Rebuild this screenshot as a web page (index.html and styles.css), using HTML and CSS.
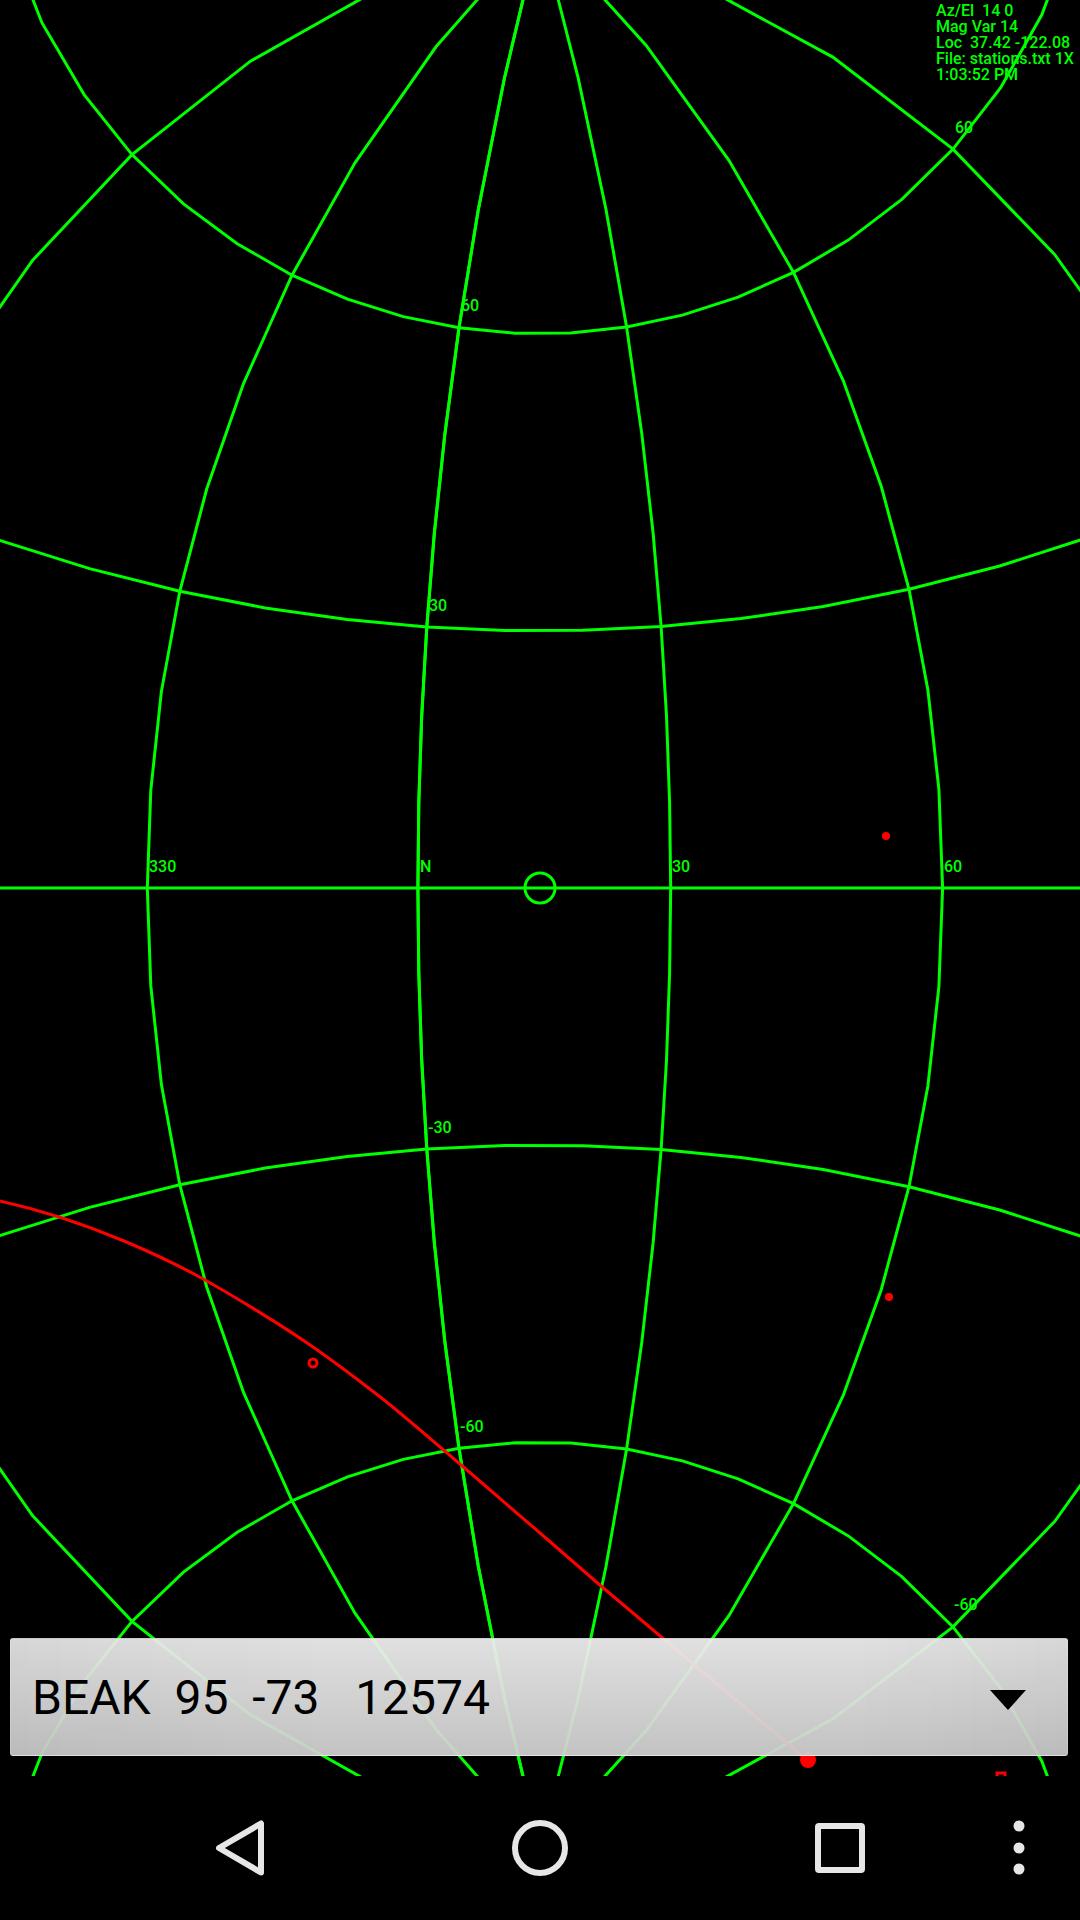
FILE: index.html
```html
<!DOCTYPE html>
<html lang="en">
<head>
<meta charset="utf-8">
<meta name="viewport" content="width=device-width, initial-scale=1">
<title>Satellite tracker</title>
<link rel="stylesheet" href="styles.css">
</head>
<body>
<div class="app">
  <main class="sky">
    <svg class="chart" viewBox="0 0 1080 1776" preserveAspectRatio="xMidYMid slice" role="img" aria-label="Sky chart">
      <g id="grid" class="grid"></g>
      <circle class="grid" cx="540" cy="888" r="15"/>
      <g class="labels">
        <text x="149" y="872">330</text>
        <text x="420" y="872">N</text>
        <text x="672" y="872">30</text>
        <text x="944" y="872">60</text>
        <text x="461" y="311">60</text>
        <text x="429" y="611">30</text>
        <text x="428" y="1133">-30</text>
        <text x="460" y="1432">-60</text>
        <text x="955" y="133">60</text>
        <text x="954" y="1610">-60</text>
      </g>
      <path class="track" d="M0 1201C40 1210 86 1225 124 1241S180 1266 205 1280S280 1324 313 1347S362 1383 384 1400S490 1490 540 1533L601 1586L808 1761"/>
      <g class="targets">
        <circle cx="886" cy="836" r="4"/>
        <circle cx="889" cy="1297" r="4"/>
        <circle cx="808" cy="1760" r="8"/>
      </g>
      <g class="track">
        <circle cx="313" cy="1363" r="4"/>
        <rect x="997" y="1773" width="8" height="8"/>
      </g>
    </svg>
    <div class="status">
      <div>Az/El&nbsp; 14 0</div>
      <div>Mag Var 14</div>
      <div>Loc&nbsp; 37.42 -122.08</div>
      <div>File: stations.txt 1X</div>
      <div>1:03:52 PM</div>
    </div>
    <div class="picker">
      <select class="picker-select" aria-label="Satellite">
        <option>BEAK&nbsp; 95&nbsp; -73&nbsp;&nbsp; 12574</option>
      </select>
      <svg class="picker-arrow" viewBox="0 0 36 20" aria-hidden="true"><path d="M0 0H36L18 20Z"/></svg>
    </div>
  </main>
  <nav class="navbar" aria-label="System">
    <button class="nav-back" aria-label="Back"><svg viewBox="0 0 60 60"><path d="M51 5.500V54.500L9 30Z"/></svg></button>
    <button class="nav-home" aria-label="Home"><svg viewBox="0 0 60 60"><circle cx="30" cy="30" r="25"/></svg></button>
    <button class="nav-recent" aria-label="Recent apps"><svg viewBox="0 0 60 60"><rect x="8" y="8" width="44" height="44" rx="1"/></svg></button>
    <button class="nav-more" aria-label="More options"><svg viewBox="0 0 14 60"><circle cx="7" cy="8" r="5.500"/><circle cx="7" cy="30" r="5.500"/><circle cx="7" cy="51" r="5.500"/></svg></button>
  </nav>
</div>
<script src="grid.js"></script>
</body>
</html>
```
FILE: grid.js
```js
// Stereographic azimuth/elevation grid, drawn in 10 degree steps.
var VIEW_AZ = 14.5, SCALE = 960, CX = 540, CY = 888, RAD = Math.PI / 180;

function project(az, el) {
  var a = (az - VIEW_AZ) * RAD, e = el * RAD;
  var k = SCALE / (1 + Math.cos(e) * Math.cos(a));
  return (CX + k * Math.cos(e) * Math.sin(a)).toFixed(1) + ',' + (CY - k * Math.sin(e)).toFixed(1);
}

function addLine(points) {
  var line = document.createElementNS('http://www.w3.org/2000/svg', 'polyline');
  line.setAttribute('points', points.join(' '));
  document.getElementById('grid').appendChild(line);
}

// The north meridian is drawn as both 0 and 360.
[300, 330, 0, 30, 60, 90, 360].forEach(function (az) {
  var pts = [];
  for (var el = -90; el <= 90; el += 10) pts.push(project(az, el));
  addLine(pts);
});

[-60, -30, 0, 30, 60].forEach(function (el) {
  var pts = [];
  for (var az = -120; az <= 150; az += 10) pts.push(project(az, el));
  addLine(pts);
});
```
FILE: styles.css
```css
* { box-sizing: border-box; }

body {
  margin: 0;
  background: #000;
  font-family: Roboto, "Liberation Sans", sans-serif;
}

.app {
  display: flex;
  flex-direction: column;
  height: 100vh;
}

.sky {
  position: relative;
  flex: 1;
  min-height: 0;
  overflow: hidden;
}

.chart {
  display: block;
  width: 100%;
  height: 100%;
}

.grid {
  fill: none;
  stroke: #0f0;
  stroke-width: 3;
}

.labels {
  fill: #0f0;
  font-size: 16px;
  font-weight: 500;
}

.track {
  fill: none;
  stroke: #f00;
  stroke-width: 3;
}

.targets { fill: #f00; }

.status {
  position: absolute;
  top: 3px;
  right: 8px;
  width: 136px;
  color: #0f0;
  font-size: 16px;
  font-weight: 500;
  line-height: 16px;
  white-space: nowrap;
}

.picker {
  position: absolute;
  right: 12px;
  bottom: 20px;
  left: 10px;
  height: 118px;
}

.picker-select {
  width: 100%;
  height: 100%;
  padding: 0 80px 0 21px;
  border: 1px solid rgba(255, 255, 255, 0.2);
  border-radius: 3px;
  appearance: none;
  background:
    linear-gradient(90deg, rgba(0, 0, 0, 0.04), transparent 30%, transparent 80%, rgba(0, 0, 0, 0.04)),
    linear-gradient(rgba(238, 238, 238, 0.94), rgba(207, 207, 207, 0.94));
  color: #000;
  font-family: inherit;
  font-size: 48px;
}

.picker-arrow {
  position: absolute;
  top: 52px;
  right: 42px;
  width: 36px;
  height: 20px;
  pointer-events: none;
}

.navbar {
  display: grid;
  grid-template-columns: 1fr repeat(3, 300px) 58px minmax(0, 32px);
  align-items: center;
  height: 144px;
}

.navbar button {
  display: flex;
  justify-content: center;
  padding: 0;
  border: 0;
  background: none;
}

.nav-back { grid-column: 2; }

.navbar svg {
  width: 60px;
  height: 60px;
  fill: none;
  stroke: #e6e6e6;
  stroke-width: 6;
  stroke-linejoin: round;
}

.navbar .nav-more svg {
  width: 14px;
  fill: #e6e6e6;
  stroke: none;
}
```
